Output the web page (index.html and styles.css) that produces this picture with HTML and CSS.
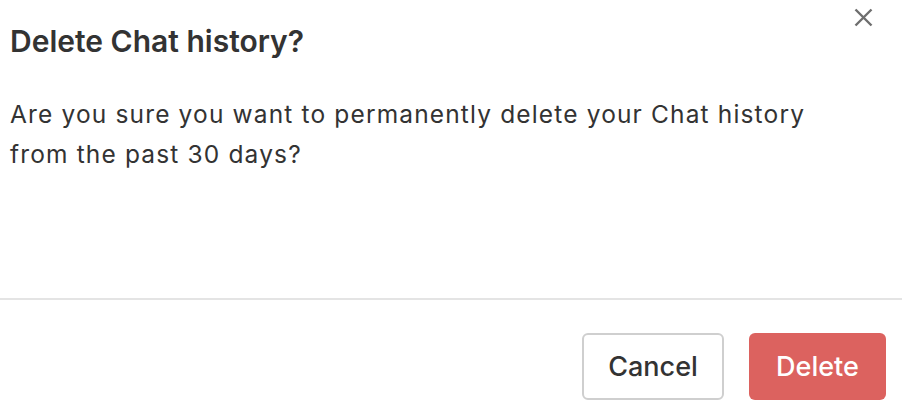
FILE: index.html
```html
<!DOCTYPE html>
<html lang="en">
<head>
    <meta charset="UTF-8">
    <meta name="viewport" content="width=device-width, initial-scale=1.0">
    <title>Delete Chat history</title>
    <link rel="stylesheet" href="styles.css">
</head>
<body>
    <div class="modal">
        <div class="modal-header">
            <h2 class="modal-title">Delete Chat history?</h2>
            <button class="close-btn" aria-label="Close">
                <svg width="19" height="19" viewBox="0 0 19 19">
                    <path d="M1.5 1.5 L17.5 17.5 M17.5 1.5 L1.5 17.5" stroke="#6e6e6e" stroke-width="2.4" stroke-linecap="butt"/>
                </svg>
            </button>
        </div>
        <div class="modal-body">
            <p>Are you sure you want to permanently delete your Chat history from the past 30 days?</p>
        </div>
        <div class="modal-footer">
            <button class="btn btn-cancel">Cancel</button>
            <button class="btn btn-delete">Delete</button>
        </div>
    </div>
</body>
</html>
```

FILE: styles.css
```css
html, body {
    margin: 0;
    padding: 0;
    background-color: white;
}
body {
    font-family: Inter, "Noto Sans", sans-serif;
    color: #333;
    width: 902px;
    height: 420px;
    overflow: hidden;
}
.modal {
    display: flex;
    flex-direction: column;
    height: 420px;
}
.modal-header {
    display: flex;
    justify-content: space-between;
    align-items: flex-start;
    padding: 23px 0 0 10px;
}
.modal-title {
    margin: 0;
    font-size: 30px;
    font-weight: 600;
    line-height: 36px;
    color: #333;
}
.close-btn {
    background: none;
    border: none;
    padding: 0;
    margin: -15px 29px 0 0;
    width: 19px;
    height: 19px;
    cursor: pointer;
}
.close-btn svg {
    display: block;
}
.modal-body {
    padding: 0 10px;
    flex-grow: 1;
}
.modal-body p {
    margin: 35px 0 0 0;
    max-width: 840px;
    font-size: 24.5px;
    letter-spacing: 1.15px;
    line-height: 40px;
}
.modal-footer {
    display: flex;
    justify-content: flex-end;
    gap: 25px;
    padding: 33px 16px 20px 0;
    border-top: 2px solid #e4e4e4;
}
.btn {
    height: 67px;
    border-radius: 6px;
    font-family: inherit;
    font-size: 27px;
    font-weight: 500;
    cursor: pointer;
}
.btn-cancel {
    width: 142px;
    background-color: white;
    color: #333;
    border: 2px solid #cfcfcf;
}
.btn-delete {
    width: 137px;
    background-color: #dc625f;
    color: white;
    border: none;
}
```
